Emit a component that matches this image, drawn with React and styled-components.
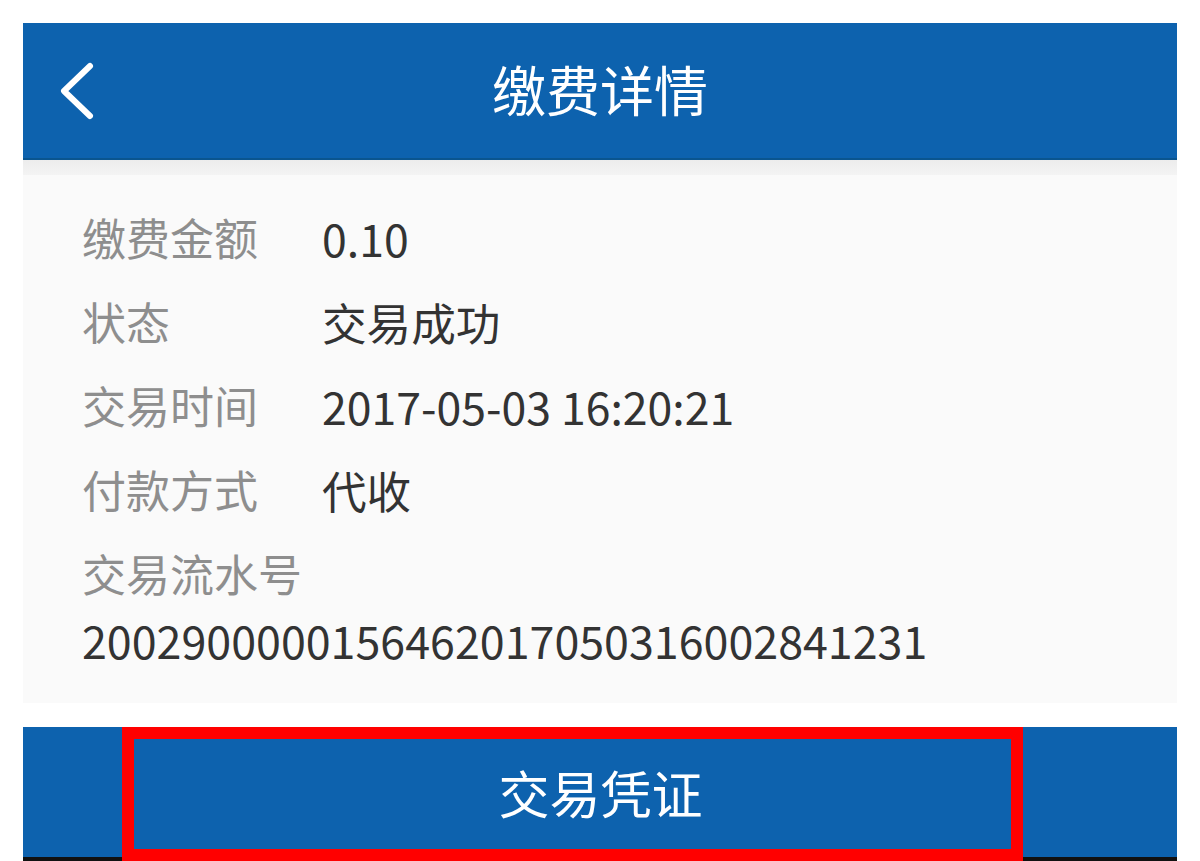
import React from 'react';
import styled, {createGlobalStyle} from "styled-components";

const GlobalStyle = createGlobalStyle`
  html, body {
    margin: 0;
    padding: 0;
    background: #ffffff;
  }
  body {
    font-family: "Noto Sans CJK SC", "Noto Sans", sans-serif;
  }
`

const Page = styled.div`
  width: 1200px;
  height: 861px;
  box-sizing: border-box;
  padding: 23px 23px 0 23px;
  overflow: hidden;
  display: flex;
  flex-direction: column;
`

const Header = styled.div`
  height: 135px;
  background: #0d62ae;
  border-bottom: 2px solid #0a558f;
  display: flex;
  align-items: center;
  justify-content: center;
  position: relative;
`

const BackButton = styled.div`
  position: absolute;
  left: 34px;
  top: 0;
  bottom: 0;
  display: flex;
  align-items: center;
`

const Title = styled.h1`
  margin: 0;
  color: #ffffff;
  font-size: 54px;
  font-weight: 400;
  letter-spacing: 0;
  line-height: 1;
  transform: translateY(-2px);
`

const Shade = styled.div`
  height: 15px;
  background: linear-gradient(#ececec, #f4f4f4);
`

const Details = styled.div`
  background: #fafafa;
  padding: 20px 0 39px 59px;
  display: flex;
  flex-direction: column;
`

const Row = styled.div`
  display: flex;
  align-items: center;
  height: 84px;
  font-size: 44px;
`

const Label = styled.span`
  color: #8e8e8e;
  width: 240px;
  flex-shrink: 0;
`

const Value = styled.span`
  color: #333333;
  font-size: 44.6px;
`

const Serial = styled.div`
  color: #333333;
  font-size: 44.8px;
  line-height: 48px;
  margin-top: 1px;
`

const Gap = styled.div`
  height: 24px;
  background: #ffffff;
`

const BottomBar = styled.div`
  flex: 1;
  background: #0d62ae;
  box-shadow: inset 0 -4px 0 #111111;
  display: flex;
  align-items: stretch;
  padding-left: 99px;
`

const ActionButton = styled.div`
  width: 901px;
  box-sizing: border-box;
  border: 12px solid #ff0000;
  background: #0d62ae;
  color: #ffffff;
  font-size: 51px;
  display: flex;
  align-items: center;
  justify-content: center;
  padding: 0 0 4px 56px;
`

const rows = [
    {label: "缴费金额", value: "0.10"},
    {label: "状态", value: "交易成功"},
    {label: "交易时间", value: "2017-05-03 16:20:21"},
    {label: "付款方式", value: "代收"},
]

const App = () => {
    return (
        <Page>
            <GlobalStyle/>
            <Header>
                <BackButton>
                    <svg width="40" height="60" viewBox="0 0 40 60">
                        <polyline points="33,5 7,30 33,55" fill="none" stroke="#ffffff"
                                  strokeWidth="6" strokeLinecap="round" strokeLinejoin="round"/>
                    </svg>
                </BackButton>
                <Title>缴费详情</Title>
            </Header>
            <Shade/>
            <Details>
                {rows.map(row => (
                    <Row key={row.label}>
                        <Label>{row.label}</Label>
                        <Value>{row.value}</Value>
                    </Row>
                ))}
                <Row>
                    <Label>交易流水号</Label>
                </Row>
                <Serial>2002900000156462017050316002841231</Serial>
            </Details>
            <Gap/>
            <BottomBar>
                <ActionButton>交易凭证</ActionButton>
            </BottomBar>
        </Page>
    )
}

export default App
